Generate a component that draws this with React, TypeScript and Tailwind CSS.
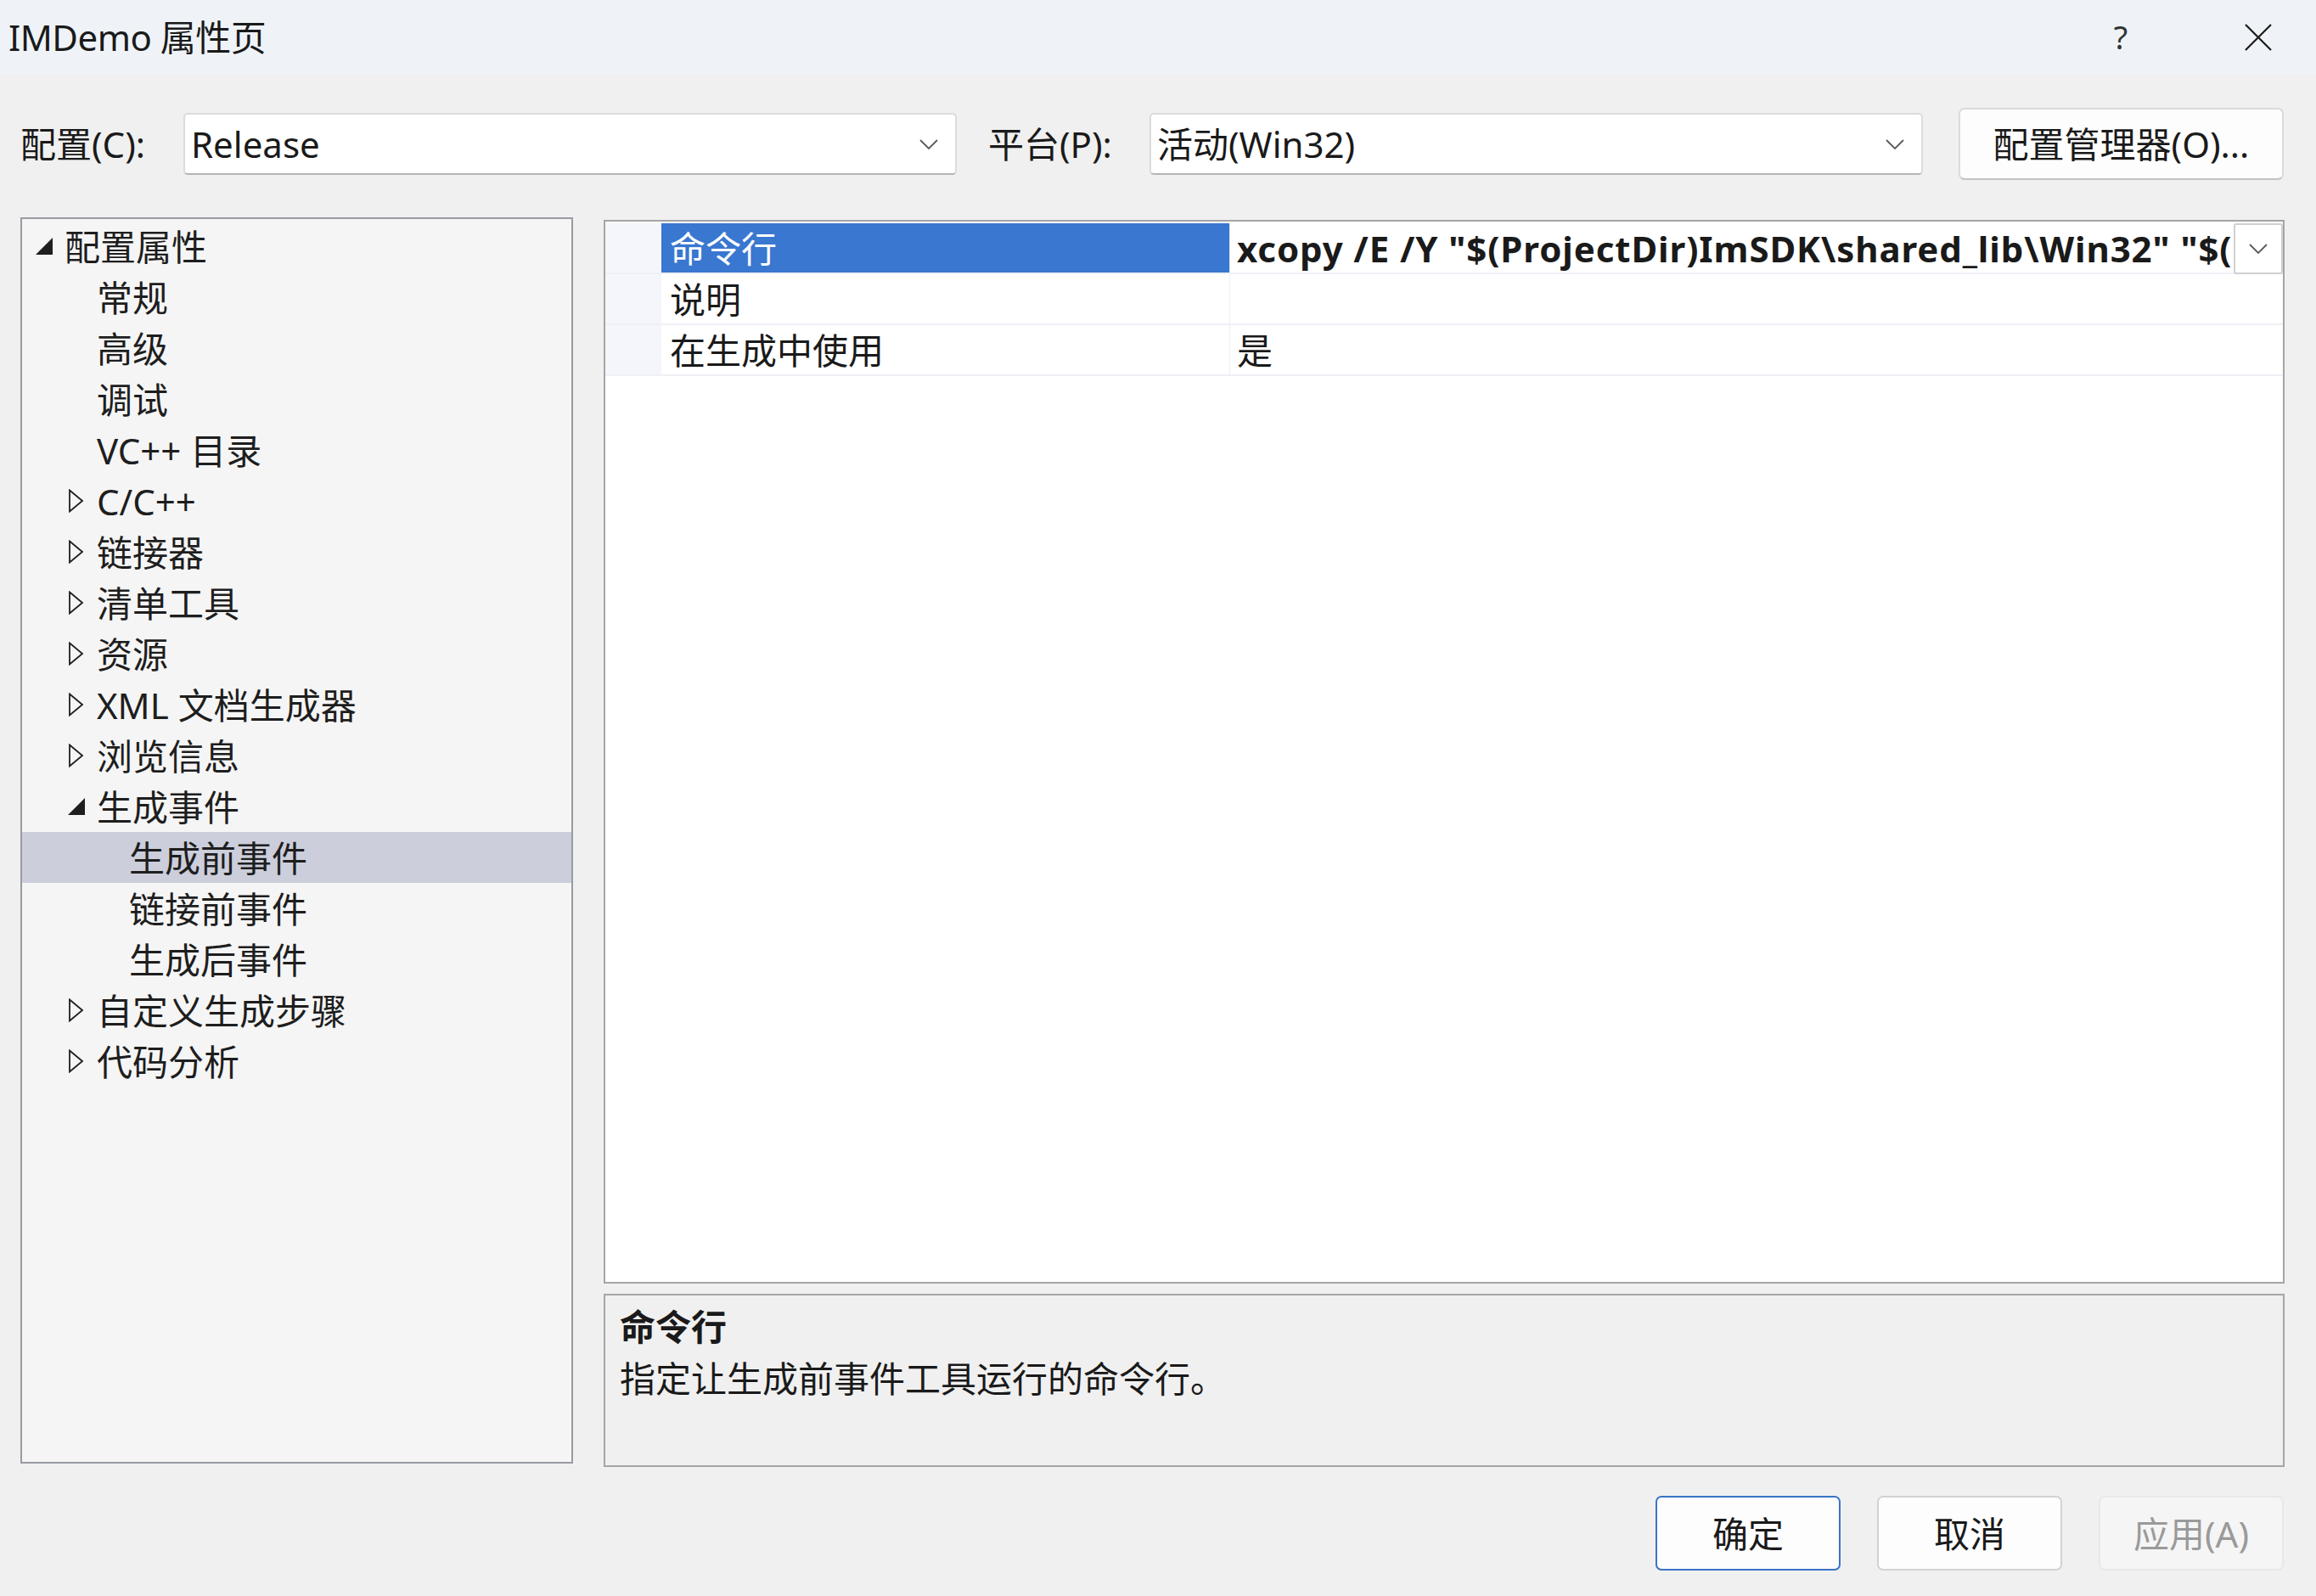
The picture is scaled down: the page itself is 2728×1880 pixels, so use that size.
import React from 'react';

type TreeItem = {
  label: string;
  level: 0 | 1 | 2;
  toggle?: 'open' | 'closed';
  selected?: boolean;
};

const tree: TreeItem[] = [
  { label: '配置属性', level: 0, toggle: 'open' },
  { label: '常规', level: 1 },
  { label: '高级', level: 1 },
  { label: '调试', level: 1 },
  { label: 'VC++ 目录', level: 1 },
  { label: 'C/C++', level: 1, toggle: 'closed' },
  { label: '链接器', level: 1, toggle: 'closed' },
  { label: '清单工具', level: 1, toggle: 'closed' },
  { label: '资源', level: 1, toggle: 'closed' },
  { label: 'XML 文档生成器', level: 1, toggle: 'closed' },
  { label: '浏览信息', level: 1, toggle: 'closed' },
  { label: '生成事件', level: 1, toggle: 'open' },
  { label: '生成前事件', level: 2, selected: true },
  { label: '链接前事件', level: 2 },
  { label: '生成后事件', level: 2 },
  { label: '自定义生成步骤', level: 1, toggle: 'closed' },
  { label: '代码分析', level: 1, toggle: 'closed' },
];

const indent = ['pl-[16px]', 'pl-[54px]', 'pl-[92px]'];

const Chevron = ({ className = '' }: { className?: string }) => (
  <svg width="22" height="12" viewBox="0 0 22 12" className={className}>
    <path d="M1 1 L11 11 L21 1" fill="none" stroke="#5a5a5a" strokeWidth="1.8" />
  </svg>
);

const Toggle = ({ kind }: { kind?: 'open' | 'closed' }) => {
  if (kind === 'open') {
    return (
      <svg width="20" height="20" viewBox="0 0 20 20">
        <polygon points="20,0 20,20 0,20" fill="#1e1e1e" />
      </svg>
    );
  }
  if (kind === 'closed') {
    return (
      <svg width="20" height="28" viewBox="0 0 20 28">
        <polygon points="2,1.5 17,14 2,26.5" fill="none" stroke="#1e1e1e" strokeWidth="1.8" />
      </svg>
    );
  }
  return null;
};

const Combo = ({ value }: { value: string }) => (
  <div className="w-[911px] h-[73px] bg-white border-2 border-[#dcdcdc] border-b-[#b4b4b4] rounded-[5px] flex items-center pl-[7px] pr-[20px]">
    <span className="flex-1">{value}</span>
    <Chevron />
  </div>
);

export default function App() {
  return (
    <div className="w-[2728px] h-[1880px] bg-[#f0f0f0] flex flex-col text-[42px] text-[#1a1a1a] font-['Noto_Sans','Noto_Sans_CJK_SC',sans-serif] overflow-hidden">
      {/* Title bar */}
      <div className="h-[87px] bg-[#eff3f8] flex items-center pl-[10px] shrink-0">
        <span className="tracking-[-0.5px]">IMDemo 属性页</span>
        <div className="ml-auto flex items-center gap-[26px]">
          <div className="w-[136px] flex justify-center text-[38px] text-[#333]">?</div>
          <div className="w-[136px] flex justify-center">
            <svg width="32" height="32" viewBox="0 0 32 32">
              <path d="M1 1 L31 31 M31 1 L1 31" stroke="#1a1a1a" strokeWidth="2.2" />
            </svg>
          </div>
        </div>
      </div>

      {/* Configuration row */}
      <div className="mt-[40px] h-[85px] flex items-center pl-[24px] shrink-0">
        <span className="w-[192px]">配置(C):</span>
        <Combo value="Release" />
        <span className="ml-[37px] w-[190px]">平台(P):</span>
        <Combo value="活动(Win32)" />
        <button className="ml-[42px] w-[383px] h-[85px] bg-[#fdfdfd] border-2 border-[#dadada] border-b-[#c2c2c2] rounded-[7px] flex items-center justify-center">
          配置管理器(O)...
        </button>
      </div>

      {/* Main area */}
      <div className="mt-[44px] flex pl-[24px] shrink-0">
        <div className="w-[651px] h-[1468px] bg-[#f5f5f5] border-2 border-[#989ba3] pt-[2px]">
          {tree.map((t, i) => (
            <div
              key={i}
              className={`h-[60px] flex items-center text-[#1e1e1e] ${indent[t.level]} ${t.selected ? 'bg-[#cccedb]' : ''}`}
            >
              <div className="w-[20px] flex items-center justify-center shrink-0">
                <Toggle kind={t.toggle} />
              </div>
              <span className="ml-[14px] whitespace-nowrap">{t.label}</span>
            </div>
          ))}
        </div>

        <div className="ml-[36px] w-[1980px] flex flex-col">
          {/* Property grid */}
          <div className="mt-[3px] h-[1253px] bg-white border-2 border-[#a5a5a5] pt-[2px]">
            <div className="h-[60px] flex border-b-2 border-[#eef0f6]">
              <div className="w-[66px] bg-[#f4f6fb] shrink-0" />
              <div className="w-[669px] bg-[#3977d0] text-white flex items-center pl-[10px] shrink-0">命令行</div>
              <div className="flex-1 flex items-center pl-[8px] font-bold tracking-[0.9px] overflow-hidden whitespace-nowrap border-l border-[#e6e9f0]">
                xcopy /E /Y "$(ProjectDir)ImSDK\shared_lib\Win32" "$(
              </div>
              <div className="w-[58px] h-[60px] bg-white border-2 border-[#d0d0d0] rounded-[3px] flex items-center justify-center shrink-0">
                <Chevron />
              </div>
            </div>
            <div className="h-[60px] flex border-b-2 border-[#eef0f6]">
              <div className="w-[66px] bg-[#f4f6fb] shrink-0" />
              <div className="w-[669px] flex items-center pl-[10px] shrink-0">说明</div>
              <div className="flex-1 flex items-center pl-[8px] border-l border-[#eef0f6]" />
            </div>
            <div className="h-[60px] flex border-b-2 border-[#eef0f6]">
              <div className="w-[66px] bg-[#f4f6fb] shrink-0" />
              <div className="w-[669px] flex items-center pl-[10px] shrink-0">在生成中使用</div>
              <div className="flex-1 flex items-center pl-[8px] border-l border-[#eef0f6]">是</div>
            </div>
          </div>

          {/* Description */}
          <div className="mt-[12px] h-[204px] bg-[#f0f0f0] border-2 border-[#a5a5a5] pl-[17px] pt-[6px]">
            <div className="h-[60px] flex items-center font-bold">命令行</div>
            <div className="h-[62px] flex items-center">指定让生成前事件工具运行的命令行。</div>
          </div>
        </div>
      </div>

      {/* Bottom buttons */}
      <div className="mt-[34px] flex justify-end pr-[38px] gap-[43px] shrink-0">
        <button className="w-[218px] h-[88px] bg-[#fdfdfd] border-2 border-[#3a73c8] rounded-[7px] flex items-center justify-center">
          确定
        </button>
        <button className="w-[218px] h-[88px] bg-[#fdfdfd] border-2 border-[#d2d2d2] rounded-[7px] flex items-center justify-center">
          取消
        </button>
        <button className="w-[218px] h-[88px] bg-[#f5f5f5] border-2 border-[#e8e8e8] rounded-[7px] flex items-center justify-center text-[#9a9a9a]">
          应用(A)
        </button>
      </div>
    </div>
  );
}
